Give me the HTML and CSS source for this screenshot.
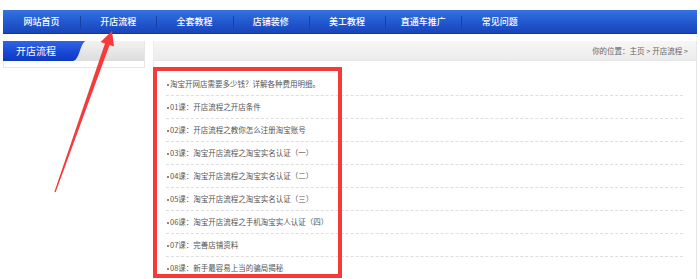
FILE: index.html
```html
<!DOCTYPE html>
<html lang="zh-CN">
<head>
  <meta charset="UTF-8">
  <title>开店流程</title>
  <link rel="stylesheet" href="styles.css">
</head>
<body>
  <ul class="nav">
    <li><a href="#">网站首页</a></li>
    <li><a href="#">开店流程</a></li>
    <li><a href="#">全套教程</a></li>
    <li><a href="#">店铺装修</a></li>
    <li><a href="#">美工教程</a></li>
    <li><a href="#">直通车推广</a></li>
    <li><a href="#">常见问题</a></li>
  </ul>
  <div class="wrap">
    <div class="side">
      <div class="side-head"><span class="side-tab">开店流程</span></div>
      <div class="side-body"></div>
    </div>
    <div class="main">
      <div class="main-head"><span class="crumb">你的位置：主页 &gt; 开店流程 &gt;</span></div>
      <ul class="list">
        <li><a href="#">淘宝开网店需要多少钱？详解各种费用明细。</a></li>
        <li><a href="#">01课：开店流程之开店条件</a></li>
        <li><a href="#">02课：开店流程之教你怎么注册淘宝账号</a></li>
        <li><a href="#">03课：淘宝开店流程之淘宝实名认证（一）</a></li>
        <li><a href="#">04课：淘宝开店流程之淘宝实名认证（二）</a></li>
        <li><a href="#">05课：淘宝开店流程之淘宝实名认证（三）</a></li>
        <li><a href="#">06课：淘宝开店流程之手机淘宝实人认证（四）</a></li>
        <li><a href="#">07课：完善店铺资料</a></li>
        <li><a href="#">08课：新手最容易上当的骗局揭秘</a></li>
      </ul>
    </div>
  </div>

  <div class="mark-box" aria-hidden="true"></div>
  <svg class="mark-arrow" width="700" height="279" viewBox="0 0 700 279" aria-hidden="true">
    <polygon points="112,31 114,46.5 109.6,45 55.6,192.2 54.4,191.8 105,43.4 100.6,41.9" fill="#f43a3a"/>
  </svg>
</body>
</html>
```

FILE: styles.css
```css
html {
  overflow: hidden;
}
body {
  margin: 10px 3px 0;
  background: #fff;
  font-family: "Noto Sans CJK SC", "DejaVu Sans", sans-serif;
  color: #555;
  position: relative;
}
ul {
  list-style: none;
  margin: 0;
  padding: 0;
}
a {
  text-decoration: none;
  color: inherit;
}

/* top menu */
.nav {
  display: flex;
  height: 23px;
  background: linear-gradient(#3473e0, #2157cf 55%, #1a45b8);
  border-bottom: 1px solid #1236a0;
}
.nav li {
  width: 76.3px;
  text-align: center;
  line-height: 23px;
  font-size: 9px;
  font-weight: 500;
  color: #fff;
  background: linear-gradient(#1a40a4, #1a40a4) no-repeat left center / 1px 12px;
}
.nav li:first-child {
  width: 77px;
  background: none;
}

.wrap {
  display: flex;
  gap: 8px;
  margin-top: 7px;
}

/* left column */
.side {
  width: 142px;
  flex: none;
}
.side-head {
  height: 20px;
  background: linear-gradient(#f2f2f2, #dcdcdc);
  border-right: 1px solid #e6e6e6;
}
.side-tab {
  display: block;
  width: 82px;
  height: 20px;
  padding-left: 13px;
  box-sizing: border-box;
  line-height: 20px;
  font-size: 10px;
  color: #fff;
  background: linear-gradient(#2f66e6, #1846d2 60%, #0f39c0);
  clip-path: path('M0 0 H83 C77 1 77 19 70 20 H0 Z');
}
.side-body {
  height: 6px;
  border: 1px solid #e6e6e6;
  border-top: none;
}

/* right column */
.main {
  flex: 1;
  border-right: 1px solid #e6e6e6;
  border-left: 1px solid #ececec;
}
.main-head {
  height: 19px;
  background: linear-gradient(#f6f6f6, #ececec);
  border-bottom: 1px solid #e6e6e6;
  text-align: right;
  padding-right: 8px;
  line-height: 19px;
  font-size: 7.5px;
  color: #666;
}
.list {
  padding: 12px 13px 0 12px;
}
.list li {
  height: 22px;
  line-height: 22px;
  border-bottom: 1px dashed #dedede;
  font-size: 7.5px;
  color: #555;
  padding-left: 1px;
}
.list li::before {
  content: "";
  display: inline-block;
  width: 2px;
  height: 2px;
  margin-right: 1px;
  background: #8a8a8a;
  vertical-align: middle;
}

/* red annotation drawn over the screenshot */
.mark-box {
  position: absolute;
  left: 150px;
  top: 57px;
  width: 181px;
  height: 203px;
  border: 4px solid #f43a3a;
}
.mark-arrow {
  position: absolute;
  left: -3px;
  top: -10px;
}
```
